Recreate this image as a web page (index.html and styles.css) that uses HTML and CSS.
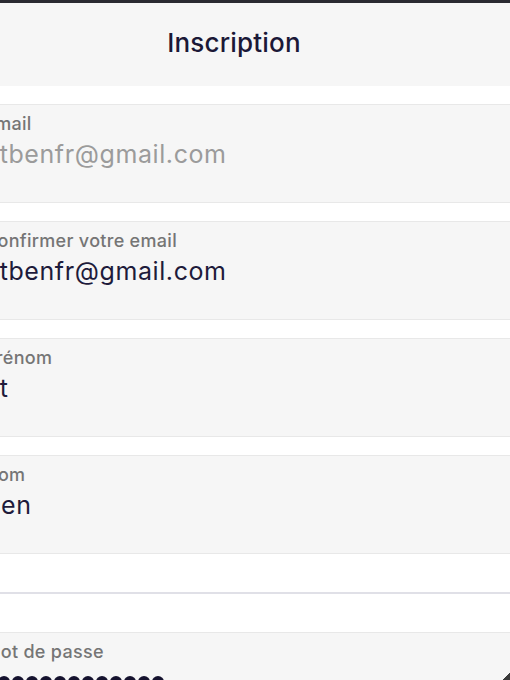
FILE: index.html
```html
<!DOCTYPE html>
<html lang="fr">
<head>
  <meta charset="UTF-8" />
  <meta name="viewport" content="width=device-width, initial-scale=1.0" />
  <title>Inscription</title>
  <link rel="stylesheet" href="styles.css">
</head>
<body>
  <div class="screen">
    <div class="status-bar"></div>
    <div class="page">
      <header class="topbar">
        <h1>Inscription</h1>
      </header>

      <form class="signup">
        <div class="field">
          <label>Email</label>
          <div class="value muted">Etbenfr@gmail.com</div>
        </div>

        <div class="field">
          <label>Confirmer votre email</label>
          <div class="value">Etbenfr@gmail.com</div>
        </div>

        <div class="field">
          <label>Prénom</label>
          <div class="value">Et</div>
        </div>

        <div class="field">
          <label>Nom</label>
          <div class="value">Ben</div>
        </div>

        <div class="divider"></div>

        <!-- mot de passe -->
        <div class="field">
          <label>Mot de passe</label>
          <div class="value dots">
            <span></span><span></span><span></span><span></span><span></span>
            <span></span><span></span><span></span><span></span><span></span>
            <span></span><span></span><span></span>
          </div>
        </div>
      </form>
    </div>
  </div>
</body>
</html>
```

FILE: styles.css
```css
* {
  margin: 0;
  padding: 0;
  box-sizing: border-box;
}
html, body {
  width: 510px;
  height: 680px;
  overflow: hidden;
}
body {
  background: #fff;
  font-family: 'Inter', 'Liberation Sans', sans-serif;
  color: #1e1b3b;
}
.screen {
  position: relative;
  width: 510px;
  height: 680px;
  overflow: hidden;
}
/* little dark corner of the device frame */
.screen::after {
  content: '';
  position: absolute;
  right: 0;
  bottom: 0;
  width: 7px;
  height: 7px;
  background: linear-gradient(to top left, #3a3a3a 50%, transparent 52%);
}
.status-bar {
  height: 3px;
  background: #2a2a31;
}
/* page is shifted a bit to the left in the capture */
.page {
  margin-left: -42px;
  width: 552px;
}
.topbar {
  height: 83px;
  background: #f6f6f6;
  display: flex;
  justify-content: center;
  align-items: center;
  padding-bottom: 4px;
}
.topbar h1 {
  font-size: 26px;
  font-weight: 500;
  color: #1b1837;
  letter-spacing: 0.2px;
}
/* Form fields */
.field {
  margin-top: 18px;
  background: #f6f6f6;
  border-top: 1px solid #e8e8e8;
  border-bottom: 1px solid #e8e8e8;
  padding: 9px 26px 33px;
}
.field label {
  display: block;
  font-size: 18px;
  font-weight: 500;
  line-height: 20px;
  letter-spacing: 0.3px;
  color: #757575;
}
.field .value {
  margin-top: 5px;
  font-size: 25px;
  line-height: 30px;
  letter-spacing: 0.6px;
  color: #1e1b3b;
  white-space: nowrap;
}
.field .value.muted {
  color: #9b9b9b;
}
.divider {
  margin: 38px 0;
  border-top: 2px solid #e0e0e7;
}
.value.dots {
  display: flex;
  gap: 2px;
  padding-top: 9px;
}
.value.dots span {
  width: 12px;
  height: 12px;
  border-radius: 50%;
  background: #15122e;
}
```
